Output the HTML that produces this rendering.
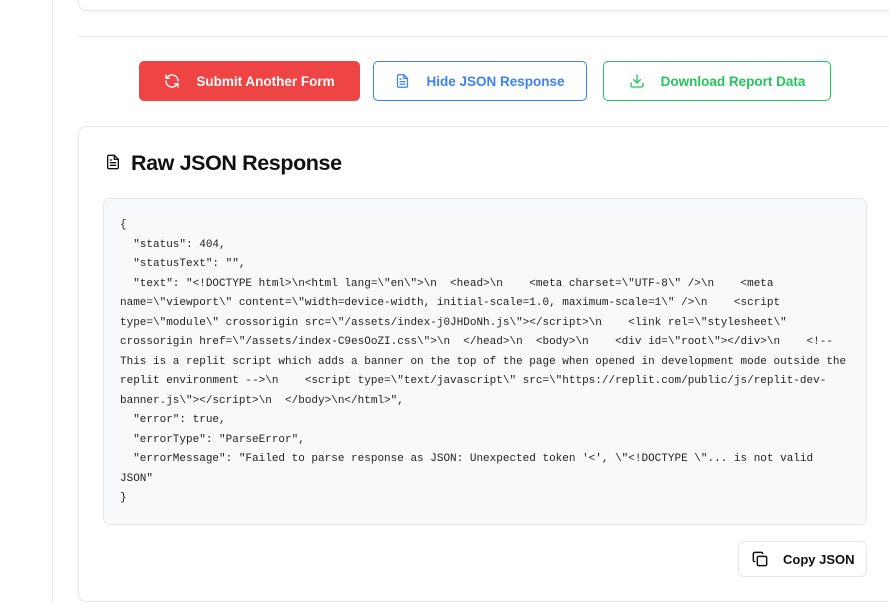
<!DOCTYPE html>
<html><head><meta charset="utf-8"><style>
*{box-sizing:border-box;margin:0;padding:0}
body{width:889px;height:602px;overflow:hidden;background:#fff;font-family:"Liberation Sans",sans-serif;position:relative}
.side{position:absolute;left:0;top:0;width:53px;height:602px;border-right:1px solid #e5e7eb;background:#fff}
.topcard{position:absolute;left:78px;top:-20px;width:830px;height:31px;border:1px solid #e5e7eb;border-radius:8px;box-shadow:0 1px 2px rgba(0,0,0,.05)}
.hr{position:absolute;left:78px;top:36px;width:811px;height:1px;background:#e5e7eb}
.btn{position:absolute;top:61px;height:40px;border-radius:5px;display:flex;align-items:center;justify-content:center;font-size:13.5px;font-weight:bold;gap:16px}
.red{left:139px;width:221px;background:#ef4444;color:#fff}
.blue{left:373px;width:214px;border:1px solid #3b82f6;color:#3b82f6}
.green{left:603px;width:228px;border:1px solid #22c55e;color:#22c55e}
.card{position:absolute;left:78px;top:126px;width:830px;height:476px;border:1px solid #e5e7eb;border-radius:8px;box-shadow:0 1px 2px rgba(0,0,0,.05)}
h2{position:absolute;left:131px;top:151px;font-size:21.5px;font-weight:600;color:#111;letter-spacing:-.4px}
.ti{position:absolute;left:105px;top:153px}
pre{position:absolute;left:103px;top:198px;width:764px;height:327px;background:#f8f9fa;border:1px solid #e5e7eb;border-radius:7px;padding:17px 16px;font-family:"Liberation Mono",monospace;font-size:11px;line-height:19.5px;color:#222}
.copy{position:absolute;left:738px;top:541px;width:129px;height:36px;border:1px solid #e5e7eb;border-radius:6px;display:flex;align-items:center;gap:15px;padding-left:13px;font-size:13px;font-weight:bold;color:#111}
</style></head><body>
<div class="side"></div>
<div class="topcard"></div>
<div class="hr"></div>
<div class="btn red"><svg width="16" height="16" viewBox="0 0 24 24" fill="none" stroke="#fff" stroke-width="2" stroke-linecap="round" stroke-linejoin="round"><path d="M21 12a9 9 0 0 0-15-6.7L3 8"/><path d="M3 3v5h5"/><path d="M3 12a9 9 0 0 0 15 6.7l3-2.7"/><path d="M16 16h5v5"/></svg>Submit Another Form</div>
<div class="btn blue"><svg width="15" height="16" viewBox="0 0 24 24" fill="none" stroke="#3b82f6" stroke-width="2" stroke-linecap="round" stroke-linejoin="round"><path d="M14 2H6a2 2 0 0 0-2 2v16a2 2 0 0 0 2 2h12a2 2 0 0 0 2-2V8z"/><path d="M14 2v6h6"/><path d="M16 13H8M16 17H8M10 9H8"/></svg>Hide JSON Response</div>
<div class="btn green"><svg width="16" height="16" viewBox="0 0 24 24" fill="none" stroke="#22c55e" stroke-width="2" stroke-linecap="round" stroke-linejoin="round"><path d="M21 15v4a2 2 0 0 1-2 2H5a2 2 0 0 1-2-2v-4"/><path d="M7 10l5 5 5-5"/><path d="M12 15V3"/></svg>Download Report Data</div>
<div class="card"></div>
<svg class="ti" width="16" height="18" viewBox="0 0 24 24" fill="none" stroke="#111" stroke-width="2" stroke-linecap="round" stroke-linejoin="round"><path d="M14 2H6a2 2 0 0 0-2 2v16a2 2 0 0 0 2 2h12a2 2 0 0 0 2-2V8z"/><path d="M14 2v6h6"/><path d="M16 13H8M16 17H8M10 9H8"/></svg>
<h2>Raw JSON Response</h2>
<pre>{
  "status": 404,
  "statusText": "",
  "text": "&lt;!DOCTYPE html&gt;\n&lt;html lang=\"en\"&gt;\n  &lt;head&gt;\n    &lt;meta charset=\"UTF-8\" /&gt;\n    &lt;meta
name=\"viewport\" content=\"width=device-width, initial-scale=1.0, maximum-scale=1\" /&gt;\n    &lt;script
type=\"module\" crossorigin src=\"/assets/index-j0JHDoNh.js\"&gt;&lt;/script&gt;\n    &lt;link rel=\"stylesheet\"
crossorigin href=\"/assets/index-C9esOoZI.css\"&gt;\n  &lt;/head&gt;\n  &lt;body&gt;\n    &lt;div id=\"root\"&gt;&lt;/div&gt;\n    &lt;!--
This is a replit script which adds a banner on the top of the page when opened in development mode outside the
replit environment --&gt;\n    &lt;script type=\"text/javascript\" src=\"https://replit.com/public/js/replit-dev-
banner.js\"&gt;&lt;/script&gt;\n  &lt;/body&gt;\n&lt;/html&gt;",
  "error": true,
  "errorType": "ParseError",
  "errorMessage": "Failed to parse response as JSON: Unexpected token '&lt;', \"&lt;!DOCTYPE \"... is not valid
JSON"
}</pre>
<div class="copy"><svg width="16" height="16" viewBox="0 0 24 24" fill="none" stroke="#111" stroke-width="2.2" stroke-linecap="round" stroke-linejoin="round"><rect x="8" y="8" width="14" height="14" rx="2"/><path d="M4 16c-1.1 0-2-.9-2-2V4c0-1.1.9-2 2-2h10c1.1 0 2 .9 2 2"/></svg>Copy JSON</div>
</body></html>
